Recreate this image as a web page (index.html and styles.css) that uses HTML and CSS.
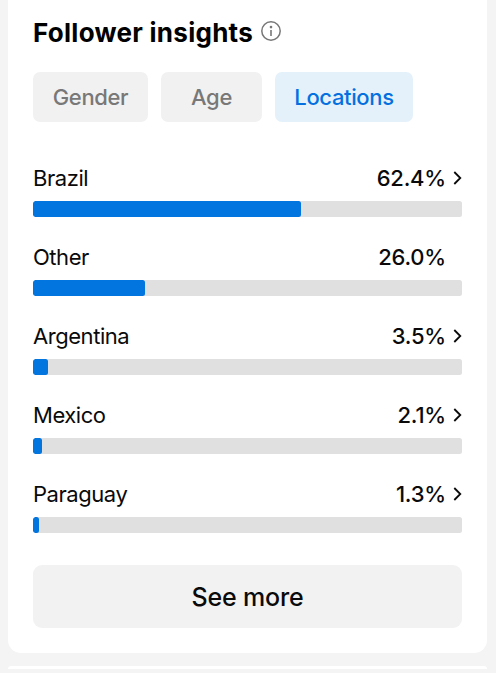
FILE: index.html
```html
<!DOCTYPE html>
<html lang="en">
<head>
  <meta charset="UTF-8">
  <meta name="viewport" content="width=device-width, initial-scale=1.0">
  <title>Follower insights</title>
  <link rel="stylesheet" href="styles.css">
</head>
<body>
  <div class="card">
    <div class="header">
      <h1>Follower insights</h1>
      <svg class="info" viewBox="0 0 20 20" fill="none">
        <circle cx="10" cy="10" r="9.2" stroke="#777" stroke-width="1.5"/>
        <circle cx="10" cy="6.1" r="1.3" fill="#777"/>
        <path d="M10 9v6" stroke="#777" stroke-width="1.6"/>
      </svg>
    </div>

    <div class="tabs">
      <button class="tab tab-gender">Gender</button>
      <button class="tab tab-age">Age</button>
      <button class="tab tab-locations active">Locations</button>
    </div>

    <div class="list">
      <div class="row">
        <div class="row-text">
          <span class="name">Brazil</span>
          <span class="value">62.4%</span>
          <svg class="chevron" viewBox="0 0 9 14"><path d="M1.3 1l6 6-6 6"/></svg>
        </div>
        <div class="bar"><div class="fill" style="width: 62.4%"></div></div>
      </div>
      <div class="row">
        <div class="row-text">
          <span class="name">Other</span>
          <span class="value">26.0%</span>
          <span class="chevron"></span>
        </div>
        <div class="bar"><div class="fill" style="width: 26%"></div></div>
      </div>
      <div class="row">
        <div class="row-text">
          <span class="name">Argentina</span>
          <span class="value">3.5%</span>
          <svg class="chevron" viewBox="0 0 9 14"><path d="M1.3 1l6 6-6 6"/></svg>
        </div>
        <div class="bar"><div class="fill" style="width: 3.5%"></div></div>
      </div>
      <div class="row">
        <div class="row-text">
          <span class="name">Mexico</span>
          <span class="value">2.1%</span>
          <svg class="chevron" viewBox="0 0 9 14"><path d="M1.3 1l6 6-6 6"/></svg>
        </div>
        <div class="bar"><div class="fill" style="width: 2.1%"></div></div>
      </div>
      <div class="row">
        <div class="row-text">
          <span class="name">Paraguay</span>
          <span class="value">1.3%</span>
          <svg class="chevron" viewBox="0 0 9 14"><path d="M1.3 1l6 6-6 6"/></svg>
        </div>
        <div class="bar"><div class="fill" style="width: 1.3%"></div></div>
      </div>
    </div>

    <button class="more-btn">See more</button>
  </div>
  <div class="next-card"></div>
</body>
</html>
```

FILE: styles.css
```css
* {
  box-sizing: border-box;
}
body {
  font-family: Inter, 'Liberation Sans', sans-serif;
  background-color: #f4f4f4;
  color: #0a0a0a;
  margin: 0;
  height: 673px;
  overflow: hidden;
}
button {
  font-family: inherit;
  border: none;
  padding: 0;
  cursor: pointer;
}
.card {
  height: 653px;
  margin: 0 9px 0 8px;
  padding: 16px 25px 0;
  background-color: #fff;
  border-radius: 0 0 13px 13px;
}
.header {
  display: flex;
  align-items: center;
  height: 32px;
  gap: 8px;
}
h1 {
  width: 220px;
  margin: 0;
  padding-top: 1px;
  color: #000;
  font-size: 26px;
  font-weight: 700;
  line-height: 32px;
  letter-spacing: 0.27px;
  white-space: nowrap;
}
.info {
  width: 20px;
  height: 20px;
  margin-bottom: 2px;
}
.tabs {
  display: flex;
  gap: 13px;
  margin-top: 24px;
}
.tab {
  height: 50px;
  border-radius: 7px;
  background-color: #f1f1f1;
  color: #787878;
  font-size: 22px;
  font-weight: 500;
  letter-spacing: -0.35px;
}
.tab-gender {
  width: 115px;
}
.tab-age {
  width: 101px;
}
.tab-locations {
  width: 138px;
}
.tab.active {
  background-color: #e4f1fb;
  color: #0470e0;
}
.list {
  margin-top: 42px;
}
.row {
  height: 79px;
}
.row-text {
  display: flex;
  align-items: center;
  height: 28px;
}
.name {
  flex: 1;
  font-size: 22px;
  letter-spacing: -0.45px;
}
.value {
  font-size: 22px;
  font-weight: 500;
  letter-spacing: -0.2px;
}
.chevron {
  width: 9px;
  height: 14px;
  margin-left: 7px;
  fill: none;
  stroke: #0a0a0a;
  stroke-width: 1.8;
}
.bar {
  height: 16px;
  margin-top: 9px;
  border-radius: 2.5px;
  background-color: #e0e0e0;
  overflow: hidden;
}
.fill {
  height: 100%;
  border-radius: 2.5px;
  background-color: #0375de;
}
.more-btn {
  display: block;
  width: 100%;
  height: 63px;
  margin-top: 6px;
  border-radius: 9px;
  background-color: #f2f2f2;
  color: #0a0a0a;
  font-size: 25px;
  font-weight: 500;
  letter-spacing: -0.2px;
}
.next-card {
  height: 3px;
  margin: 13px 9px 0 8px;
  background-color: #fff;
  border-radius: 6px 6px 0 0;
}
```
